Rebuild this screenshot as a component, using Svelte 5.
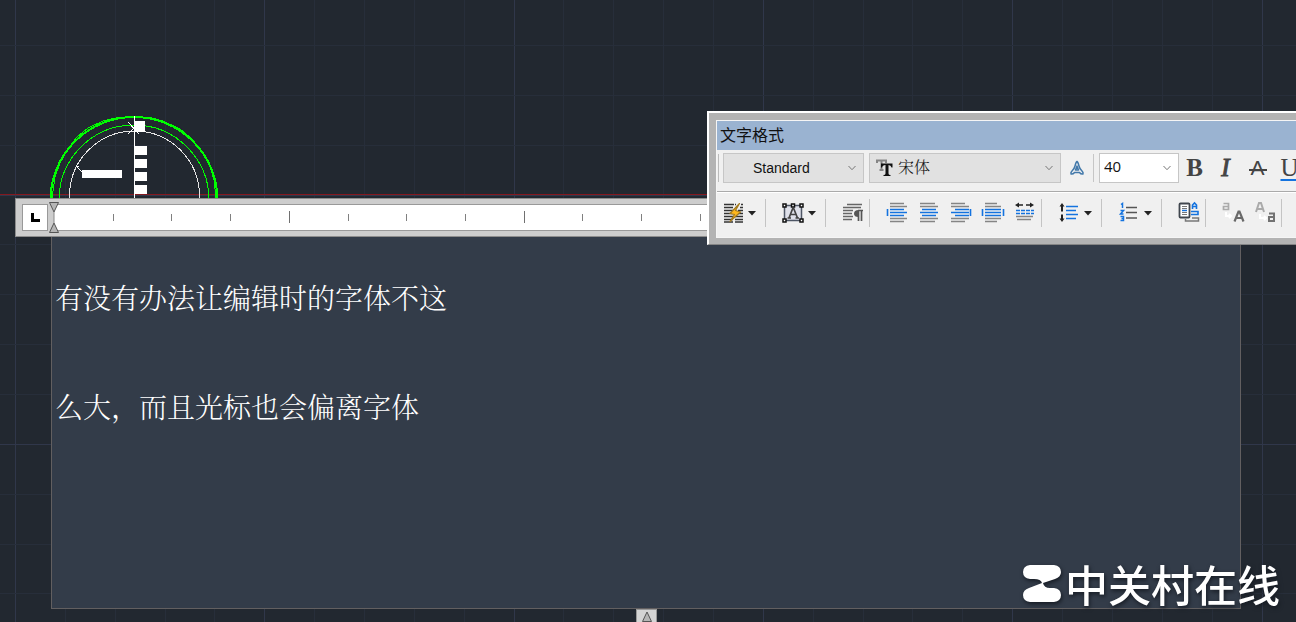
<script>
  let content = $state('有没有办法让编辑时的字体不这\n么大，而且光标也会偏离字体');
  const columns = Array.from({ length: 45 }, (_, i) => ({ x: Math.round(15 + i * 49.86), major: i % 5 === 0 }));
  const lines = Array.from({ length: 24 }, (_, i) => ({ y: Math.round(45 + i * 49.86), major: i % 5 === 3 }));
  const ticks = Array.from({ length: 30 }, (_, i) => ({ x: Math.round((i + 1) * 58.7), major: (i + 1) % 4 === 0 }));
</script>

{#snippet arrow()}
  <svg class="arrow" width="8" height="24" viewBox="0 0 8 24" aria-hidden="true"><path d="M0 10h8L4 14.500z" fill="#222" /></svg>
{/snippet}

{#snippet chevron()}
  <svg class="chevron" width="8" height="8" viewBox="0 0 8 8" aria-hidden="true"><path d="M.5 2l3.500 3.700L7.500 2" fill="none" stroke="#777" /></svg>
{/snippet}

<main>
  <svg class="drawing" width="100%" height="100%" aria-hidden="true">
    {#each columns as c}<rect x={c.x} y="0" width="1" height="100%" fill={c.major ? '#30374a' : '#272e3a'} />{/each}
    {#each lines as l}<rect x="0" y={l.y} width="100%" height="1" fill={l.major ? '#30374a' : '#272e3a'} />{/each}
    <rect x="0" y="194" width="100%" height="1" fill="#84191f" />
    <g fill="none" shape-rendering="crispEdges">
      <ellipse cx="134" cy="200" rx="83.500" ry="83" stroke="#0f0" stroke-width="2" />
      <path d="M52 198L55 177L60 163L68 149L77 137L88 128L103 121L120 117H148L163 121L180 129L192 139L202 152L210 166L214 180L216 198" stroke="#0f0" />
      <ellipse cx="134" cy="200" rx="75" ry="75" stroke="#0f0" />
      <ellipse cx="134.500" cy="196" rx="65" ry="65" stroke="#e4e4e4" />
      <path d="M134.500 116v82" stroke="#fff" stroke-width="1.500" />
      <path d="M128 122l11 12M128 134l8-8M76 166l7 7M76 166l3 1" stroke="#fff" />
    </g>
    <path d="M134 121h11v11h-11zM135 146h12v9h-12zM135 159h12v9h-12zM135 172h12v9h-12zM135 185h12v9h-12zM82 170h40v8h-40z" fill="#fff" />
  </svg>

  <div class="ruler">
    <button class="tab" aria-label="Tab stop"><svg width="9" height="9" viewBox="0 0 9 9"><path d="M0 0h3v6h6v3H0z" fill="#000" /></svg></button>
    <div class="scale">
      <svg class="ticks" width="100%" height="25" aria-hidden="true">
        {#each ticks as t}<rect x={t.x} y={t.major ? 6 : 9} width="1" height={t.major ? 12 : 7} fill={t.major ? '#707070' : '#808080'} />{/each}
      </svg>
      <svg class="indents" width="10" height="31" viewBox="0 0 10 31" aria-hidden="true"><path d="M.5.5h9L5 10zM.5 30.500h9L5 21z" fill="#b5b5b5" stroke="#555" /><path d="M5 10v11" stroke="#888" /></svg>
    </div>
  </div>
  <textarea aria-label="Text" spellcheck="false" bind:value={content}></textarea>
  <div class="foot"><button class="handle" aria-label="Resize height"><svg width="12" height="12" viewBox="0 0 12 12"><path d="M6 1l4.500 9.500h-9z" fill="#b5b5b5" stroke="#555" /></svg></button></div>

  <section class="panel" aria-label="文字格式">
    <div class="body">
      <h1>文字格式</h1>
      <div class="row fonts">
        <i class="grip"></i>
        <label class="combo style"><select aria-label="Style"><option>Standard</option></select>{@render chevron()}</label>
        <label class="combo face">
          <svg class="tt" width="18" height="18" viewBox="0 0 18 18" aria-hidden="true"><path d="M1 4V1.500h9V4M5.500 1.500V11M3.500 11h4" fill="none" stroke="#858585" stroke-width="2" /><path d="M5 4.500h11.500v4h-1q-.5-2.500-3-2.500v8.500q0 1.500 2 1.500v1H7.500v-1q2 0 2-1.500V6q-3 0-3.500 2.500H5z" fill="#111" /></svg>
          <select aria-label="Font"><option>宋体</option></select>{@render chevron()}
        </label>
        <button class="annotate" aria-label="Annotative"><svg width="16" height="16" viewBox="0 0 16 16"><path d="M8 1.500Q9 2 10 6Q10.500 8.500 13 11Q14.500 12.500 14 14Q12 14.500 10.500 12.500H5.500Q4 14.500 2 14Q1.500 12.500 3 11Q5.500 8.500 6 6Q7 2 8 1.500zM8 6L6.500 10h3z" fill="none" stroke="#4379aa" stroke-width="1.500" stroke-linejoin="round" /></svg></button>
        <label class="combo size"><select aria-label="Height"><option>40</option></select>{@render chevron()}</label>
        <div class="marks">
          <button class="bold">B</button><button class="italic">I</button><button class="strike">A</button><button class="under">U</button>
        </div>
      </div>
      <div class="row tools">
        <div class="group"><button class="drop" aria-label="Options">
          <svg width="24" height="24" viewBox="0 0 24 24"><path d="M3 3.500h10M3 6.500h9M3 9.500h9M3 12.500h9M3 15.500h9M3 18.500h9M3 21h9M14 3.500h1M20 3.500h2M19 6.500h3M17 9.500h5M14 12.500h8M14 15.500h8M14 18.500h8M14 21h8" stroke="#333" stroke-width="1.500" /><path d="M18.500 2.500L9 12.500l4.500 1L9 20.500l10.500-9.500-5-1.500z" fill="#ffb81d" stroke="#a37b20" stroke-width="1.200" stroke-linejoin="round" /></svg>{@render arrow()}</button></div>
        <div class="group"><button class="drop" aria-label="Mask">
          <svg width="24" height="24" viewBox="0 0 24 24"><path d="M3.500 4.500h17v15h-17z" fill="#dfe1ea" stroke="#4e5665" stroke-width="1.500" /><path d="M8 17l3.700-9.500h1L16.500 17M9.500 13.500h5M6.500 17h3.500M14.500 17H18" fill="none" stroke="#444" stroke-width="1.700" /><path d="M2 3h3v3H2zM10.500 3h3v3h-3zM19 3h3v3h-3zM2 18h3v3H2zM19 18h3v3h-3z" fill="#fff" stroke="#111" stroke-width="1.500" /></svg>{@render arrow()}</button></div>
        <div class="group"><button aria-label="Paragraph">
          <svg width="24" height="24" viewBox="0 0 24 24"><path d="M6 3.500h15M2 6.500h18M2 9.500h10M2 12.500h9M2 15.500h10M2 18.500h9" stroke="#666" stroke-width="1.400" /><path d="M22 9.500h-5M17.500 10v10M20.500 10v10" fill="none" stroke="#555" stroke-width="1.700" /><path d="M17.500 9Q13 9 13 12.500T17.500 16z" fill="#555" /></svg></button></div>
        <div class="group">
          <button aria-label="Left"><svg width="24" height="24" viewBox="0 0 24 24"><path d="M5 2.500h14M5 5.500h17M5 17.500h17M5 20.500h14" stroke="#858585" stroke-width="1.300" /><path d="M5 8.500h14M5 11.500h17M5 14.500h14M2.500 8v7" stroke="#1473df" stroke-width="1.600" /></svg></button>
          <button aria-label="Center"><svg width="24" height="24" viewBox="0 0 24 24"><path d="M3 2.500h15M3 5.500h18M3 17.500h18M3 20.500h15" stroke="#858585" stroke-width="1.300" /><path d="M5 8.500h14M3 11.500h18M5 14.500h14" stroke="#1473df" stroke-width="1.600" /></svg></button>
          <button aria-label="Right"><svg width="24" height="24" viewBox="0 0 24 24"><path d="M2 2.500h14M2 5.500h18M2 17.500h18M2 20.500h14" stroke="#858585" stroke-width="1.300" /><path d="M6 8.500h14M2 11.500h18M6 14.500h14M21.500 8v7" stroke="#1473df" stroke-width="1.600" /></svg></button>
          <button aria-label="Justify"><svg width="24" height="24" viewBox="0 0 24 24"><path d="M4 2.500h12M4 5.500h16M4 17.500h16M4 20.500h12" stroke="#858585" stroke-width="1.300" /><path d="M4 8.500h16M4 11.500h16M4 14.500h16M1.500 8v7M22.500 8v7" stroke="#1473df" stroke-width="1.600" /></svg></button>
          <button aria-label="Distribute"><svg width="24" height="24" viewBox="0 0 24 24"><path d="M2 4l4-2.500v1.700h4v1.600H6v1.700zM21 4l-4-2.500v1.700h-4v1.600h4v1.700z" fill="#222" /><path d="M3 9.500h18M3 12.500h18" stroke="#1473df" stroke-width="1.600" stroke-dasharray="4 1" /><path d="M3 15.500h17M4 18.500h14" stroke="#858585" stroke-width="1.400" /></svg></button>
        </div>
        <div class="group"><button class="drop" aria-label="Line spacing">
          <svg width="24" height="24" viewBox="0 0 24 24"><path d="M5 2l2.500 3.500H6v5H4v-5H2.500zM5 21l2.500-3.500H6v-4H4v4H2.500z" fill="#222" /><path d="M9 5.500h12M9 9.500h10M9 13.500h12M9 17.500h10" stroke="#1473df" stroke-width="1.500" /></svg>{@render arrow()}</button></div>
        <div class="group"><button class="drop" aria-label="Numbering">
          <svg width="24" height="24" viewBox="0 0 24 24"><path d="M9 6.500h11M9 11.500h11M9 17h11" stroke="#555" stroke-width="1.500" /><path d="M4 3.500l1.500-1V7M3.500 9.500h3l-3 3.500h3M3.500 15.500h3v4h-3M4.500 17.500h2" fill="none" stroke="#1473df" stroke-width="1.500" /></svg>{@render arrow()}</button></div>
        <div class="group"><button aria-label="Insert field">
          <svg width="24" height="24" viewBox="0 0 24 24"><rect x="2.500" y="2.500" width="10" height="14" rx="1" fill="#fff" stroke="#40464e" stroke-width="1.800" /><path d="M5 5.500h5M5 7.500h5M5 11.500h5M5 13.500h5" stroke="#777" /><path d="M5 9.500h5" stroke="#1473df" stroke-width="1.500" /><path d="M15.500 8V4l2-2 2 2v4M15.500 5.500h4M14 10.500h7v3h-7" fill="none" stroke="#1473df" stroke-width="1.600" /><path d="M8.500 18v2h13v-3H15" fill="none" stroke="#777" stroke-width="1.500" /></svg></button></div>
        <div class="group case">
          <button aria-label="Uppercase"><svg width="24" height="24" viewBox="0 0 24 24"><path d="M2.500 2.500h5v6h-5V5.500h5" fill="none" stroke="#aaa" stroke-width="1.700" /><path d="M5 11v4h5M8 13l2 2-2 2" fill="none" stroke="#fff" stroke-width="2" /><path d="M13.500 20.500l4-10h1l4 10M15 17h6" fill="none" stroke="#696969" stroke-width="2.200" /></svg></button>
          <button aria-label="Lowercase"><svg width="24" height="24" viewBox="0 0 24 24"><path d="M3 11l3-9h2l3 9M4 8h6" fill="none" stroke="#aaa" stroke-width="2" /><path d="M7 13v4h6M11 15l2 2-2 2" fill="none" stroke="#fff" stroke-width="2" /><path d="M16 12.500h5V20h-5v-4h5" fill="none" stroke="#727272" stroke-width="2" /></svg></button>
        </div>
      </div>
    </div>
  </section>

  <div class="brand">
    <svg width="38" height="37" viewBox="0 0 38 37" aria-hidden="true"><path d="M7 0H31Q38 1 38 7Q38 12 32 14L20 18Q21 23 27 23H31Q38 24 38 30Q38 36 31 37H7Q0 36 0 30Q0 25 6 23L19 18Q18 14 11 14H7Q0 13 0 7Q0 1 7 0z" fill="#fff" /></svg>
    <span>中关村在线</span>
  </div>
</main>

<style>
  :global(body) { margin: 0; background: #222830; }
  * { box-sizing: border-box; }
  main { position: relative; display: flex; flex-direction: column; height: 100vh; min-height: 420px; padding: 198px 55px 0 15px; overflow: hidden; background: #222830; font-family: "Liberation Sans", "Noto Sans CJK SC", sans-serif; }
  button { display: flex; align-items: center; justify-content: center; padding: 0; border: 0; background: none; color: #444; }
  svg { flex: none; }
  .drawing { position: absolute; inset: 0; }
  .ruler { position: relative; display: flex; gap: 6px; padding: 5px 8px 5px 6px; border: 1px solid #8d8d8d; background: #cdcdcd; }
  .tab { width: 26px; height: 27px; border: 1px solid #999; background: #fff; }
  .scale { position: relative; flex: 1; height: 27px; border: 1px solid #999; border-left: 0; background: #fff; }
  .ticks { display: block; }
  .indents { position: absolute; left: -5px; top: -3px; }
  textarea { position: relative; display: block; flex: 1; margin-left: 36px; padding: 6px 3px; border: 1px solid #625f60; border-top: 0; background: #333c49; color: #fff; font: 300 28px/109px "Noto Serif CJK SC", "Noto Sans CJK SC", serif; resize: none; outline: 0; overflow: hidden; }
  .foot { display: flex; justify-content: center; height: 13px; padding-left: 37px; position: relative; }
  .handle { flex: none; width: 21px; height: 16px; border: 1px solid #999; background: #d4d4d4; }
  .panel { position: absolute; left: 707px; right: 0; top: 111px; padding: 7px 0 6px 7px; border: 2px solid #fff; border-right: 0; border-bottom: 1px solid #858585; background: #b3b3b3; }
  .body { border: 1px solid #f5f5f5; border-right: 0; background: #f0f0f0; overflow: hidden; }
  h1 { height: 29px; margin: 0; padding-left: 3px; background: #9ab3d1; color: #111; font: 400 16px/27px "Noto Sans CJK SC", sans-serif; }
  .row { display: flex; align-items: center; }
  .fonts { height: 42px; padding-bottom: 6px; border-bottom: 1px solid #aaa; }
  .grip { flex: none; width: 2px; height: 28px; margin-right: 4px; border-right: 1px solid #bbb; }
  .combo { position: relative; display: flex; flex: none; align-items: center; height: 30px; border: 1px solid #c6c6c6; background: #e1e1e1; }
  .combo select { width: 100%; height: 100%; padding: 0; border: 0; appearance: none; background: none; color: #111; font: 14px "Liberation Sans", sans-serif; }
  .chevron { position: absolute; right: 7px; }
  .style { width: 141px; margin-right: 5px; }
  .style select { padding-left: 29px; }
  .face { width: 192px; gap: 4px; padding-left: 6px; }
  .face select { padding-bottom: 2px; font: 300 16px "Noto Serif CJK SC", "Noto Sans CJK SC", serif; }
  .annotate { flex: none; width: 33px; height: 28px; margin-right: 5px; border-right: 1px solid #c6c6c6; }
  .size { width: 80px; background: #fff; }
  .size select { padding: 0 0 3px 4px; font: 15px "Open Sans", sans-serif; }
  .marks { display: flex; flex: none; }
  .marks button { flex: none; width: 31px; height: 30px; font: 25px "Liberation Serif", serif; }
  .marks .bold { font-weight: 700; }
  .marks .italic { font-style: italic; -webkit-text-stroke: 1px #444; }
  .marks .strike { width: 33px; font: 21px "Liberation Sans", sans-serif; }
  .marks .strike { background: linear-gradient(#444, #444) center 16px / 18px 2px no-repeat; }
  .marks .under { text-decoration: underline #1473df 2px; text-underline-offset: 3px; }
  .tools { height: 45px; padding-bottom: 5px; border-top: 1px solid #fff; }
  .group { display: flex; flex: none; height: 28px; margin-right: 11px; border-right: 1px solid #c4c4c4; }
  .group button { width: 32px; }
  .group .drop { width: 48px; justify-content: flex-start; gap: 3px; padding-left: 4px; }
  .brand { position: absolute; right: 16px; bottom: 20px; display: flex; align-items: center; gap: 4px; color: #fff; font: 500 43px/37px "Noto Sans CJK SC", sans-serif; filter: drop-shadow(1px 2px 2px #151a22); }
</style>
